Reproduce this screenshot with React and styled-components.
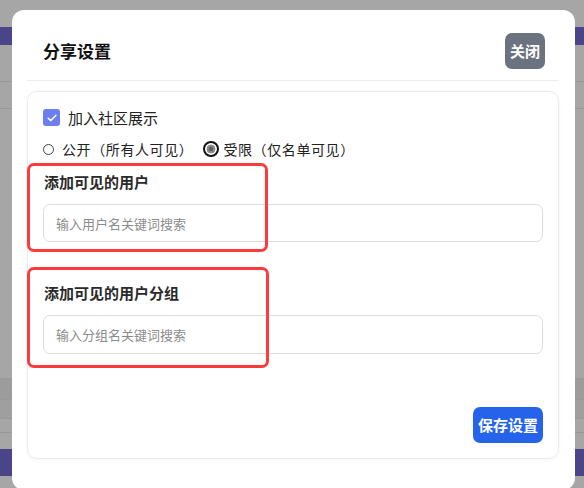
import React from "react";
import styled, { createGlobalStyle } from "styled-components";

const Global = createGlobalStyle`
  html, body { margin: 0; padding: 0; }
  body {
    font-family: "Noto Sans CJK SC", "Noto Sans", sans-serif;
    text-spacing-trim: space-all;
  }
  * { box-sizing: border-box; }
`;

const Page = styled.div`
  position: relative;
  width: 584px;
  height: 488px;
  overflow: hidden;
  background: #a6a6a6;
`;

const BgLayer = styled.div`
  display: flex;
  flex-direction: column;
`;

const BgBand = styled.div`
  height: ${(p) => p.h}px;
  background: ${(p) => p.c || "transparent"};
  border-bottom: ${(p) => (p.line ? "1px solid #999" : "none")};
`;

const Modal = styled.div`
  position: absolute;
  top: 10px;
  left: 12px;
  width: 563px;
  height: 480px;
  background: #fff;
  border-radius: 12px;
  padding: 0 16px 31px 15px;
  display: flex;
  flex-direction: column;
`;

const Header = styled.div`
  display: flex;
  justify-content: space-between;
  align-items: center;
  padding: 23px 14px 11px 16px;
  border-bottom: 1px solid #ececec;
`;

const Title = styled.h2`
  margin: 0;
  font-size: 17px;
  font-weight: 700;
  color: #111;
  line-height: 24px;
`;

const Button = styled.button`
  border: none;
  border-radius: 7px;
  height: 36px;
  padding: 0 ${(p) => p.px}px;
  background: ${(p) => p.bg};
  color: #fff;
  font-family: inherit;
  font-size: 15px;
  font-weight: 700;
  line-height: 36px;
`;

const Card = styled.div`
  margin-top: 10px;
  flex: 1;
  border: 1px solid #ebebeb;
  border-radius: 10px;
  box-shadow: 0 1px 4px rgba(0, 0, 0, 0.04);
  padding: 17px 15px 15px 15px;
  display: flex;
  flex-direction: column;
`;

const CheckRow = styled.label`
  display: flex;
  align-items: center;
  gap: 8px;
  height: 17px;
  font-size: 15px;
  color: #222;
`;

const CheckBox = styled.span`
  width: 17px;
  height: 17px;
  border-radius: 3px;
  background: #6b7ff2;
  display: flex;
  align-items: center;
  justify-content: center;
`;

const RadioRow = styled.div`
  display: flex;
  align-items: center;
  height: 20px;
  margin-top: 13px;
  font-size: 14px;
  color: #222;
`;

const RadioItem = styled.label`
  display: flex;
  align-items: center;
  gap: ${(p) => p.gap}px;
  margin-right: 10px;
  letter-spacing: 0.6px;
`;

const RadioOff = styled.span`
  width: 11px;
  height: 11px;
  border-radius: 50%;
  border: 1px solid #444;
  background: #fff;
`;

const RadioOn = styled.span`
  width: 16px;
  height: 16px;
  border-radius: 50%;
  border: 2px solid #111;
  background: radial-gradient(circle, #5e5e5e 0 2px, #8a8a8a 2.5px 4.2px, #fff 4.7px);
`;

const Section = styled.div`
  position: relative;
  margin-top: ${(p) => p.mt}px;
  display: flex;
  flex-direction: column;
  gap: 12px;
`;

const SectionLabel = styled.div`
  font-size: 15px;
  font-weight: 700;
  color: #2a2a2a;
  line-height: 20px;
  padding-left: 1px;
`;

const Input = styled.input`
  height: ${(p) => p.h}px;
  border: 1px solid #dcdcdc;
  border-radius: 7px;
  padding: 0 12px;
  font-family: inherit;
  font-size: 13px;
  color: #333;
  outline: none;
  &::placeholder { color: #8c8c8c; }
`;

const Highlight = styled.div`
  position: absolute;
  left: -16px;
  top: ${(p) => p.top}px;
  bottom: ${(p) => p.bottom}px;
  width: ${(p) => p.w}px;
  border: 3px solid #ff3a3a;
  border-radius: 7px;
  pointer-events: none;
`;

const Footer = styled.div`
  margin-top: auto;
  display: flex;
  justify-content: flex-end;
`;

export default function App() {
  return (
    <Page>
      <Global />
      <BgLayer>
        <BgBand h={27} />
        <BgBand h={18} c="#4b4489" />
        <BgBand h={37} line />
        <BgBand h={27} line />
        <BgBand h={260} />
        <BgBand h={10} line />
        <BgBand h={21} c="#9c9c9c" line />
        <BgBand h={19} c="#9f9f9f" line />
        <BgBand h={14} line />
        <BgBand h={16} />
        <BgBand h={27} c="#4b4489" />
      </BgLayer>
      <Modal>
        <Header>
          <Title>分享设置</Title>
          <Button bg="#6b7280" px={5}>关闭</Button>
        </Header>
        <Card>
          <CheckRow>
            <CheckBox>
              <svg width="12" height="12" viewBox="0 0 12 12">
                <path d="M2.2 6.2 L4.8 8.6 L9.8 3.4" fill="none" stroke="#fff" strokeWidth="1.5" strokeLinecap="round" strokeLinejoin="round" />
              </svg>
            </CheckBox>
            加入社区展示
          </CheckRow>
          <RadioRow>
            <RadioItem gap={8}>
              <RadioOff />
              公开（所有人可见）
            </RadioItem>
            <RadioItem gap={4}>
              <RadioOn />
              受限（仅名单可见）
            </RadioItem>
          </RadioRow>
          <Section mt={13}>
            <Highlight top={-9} bottom={-10} w={241} />
            <SectionLabel>添加可见的用户</SectionLabel>
            <Input h={38} placeholder="输入用户名关键词搜索" />
          </Section>
          <Section mt={41}>
            <Highlight top={-16} bottom={-14} w={242} />
            <SectionLabel>添加可见的用户分组</SectionLabel>
            <Input h={39} placeholder="输入分组名关键词搜索" />
          </Section>
          <Footer>
            <Button bg="#2563eb" px={5}>保存设置</Button>
          </Footer>
        </Card>
      </Modal>
    </Page>
  );
}
